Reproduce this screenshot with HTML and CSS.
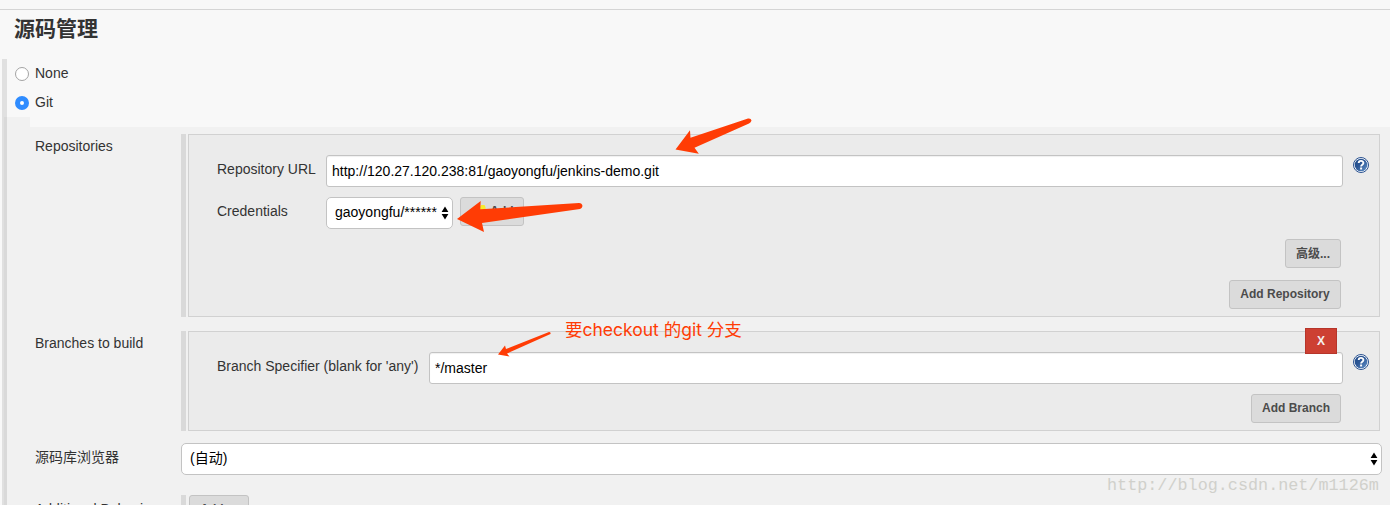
FILE: index.html
```html
<!DOCTYPE html>
<html lang="zh">
<head>
<meta charset="utf-8">
<title>源码管理</title>
<link rel="stylesheet" href="styles.css">
</head>
<body>
<svg class="defs" width="0" height="0">
  <defs>
    <linearGradient id="blue" x1="0" y1="0" x2="1" y2="1">
      <stop offset="0" stop-color="#204a87"/><stop offset="0.45" stop-color="#2c5796"/><stop offset="1" stop-color="#6795ca"/>
    </linearGradient>
    <symbol id="help" viewBox="0 0 16 16">
      <circle cx="8" cy="8" r="7.500" fill="#fff" stroke="#2a5290"/>
      <circle cx="8" cy="8" r="6.300" fill="url(#blue)"/>
      <path d="M5.700 6.100C5.700 3.200 10.400 3.200 10.400 5.900C10.400 7.700 8.100 7.600 8.100 9.500" fill="none" stroke="#fff" stroke-width="1.900"/>
      <rect x="7.100" y="10.500" width="2" height="2" fill="#fff"/>
    </symbol>
    <symbol id="updown" viewBox="0 0 8 14">
      <path d="M4 0.500L7.400 6H.6ZM4 13.500L7.400 8H.6Z"/>
    </symbol>
  </defs>
</svg>
<main class="page">
  <div class="divider"></div>
  <h2 class="title">源码管理</h2>
  <section class="section">
    <div class="radios">
      <label class="radio"><span class="dot"></span>None</label>
      <label class="radio"><span class="dot checked"></span>Git</label>
    </div>
    <div class="git">
      <div class="tab"></div>
      <div class="body">
        <div class="row">
          <div class="name">Repositories</div>
          <div class="chunk">
            <div class="panel repositories">
              <div class="field">
                <span class="label repo-label">Repository URL</span>
                <div class="input">http://120.27.120.238:81/gaoyongfu/jenkins-demo.git</div>
                <svg class="help"><use href="#help"/></svg>
              </div>
              <div class="field credentials">
                <span class="label repo-label">Credentials</span>
                <div class="select cred-select"><span>gaoyongfu/******</span><svg class="updown"><use href="#updown"/></svg></div>
                <div class="button add"><svg class="key" viewBox="0 0 16 16"><path d="M11 2H14.500L15.500 4V7L9 14H4L10 7V4Z" fill="#f8ea2c"/></svg>Add</div>
              </div>
              <div class="actions"><div class="button advanced">高级...</div></div>
              <div class="actions"><div class="button add-repo">Add Repository</div></div>
            </div>
          </div>
        </div>
        <div class="row branches-row">
          <div class="name">Branches to build</div>
          <div class="chunk">
            <div class="panel branches">
              <div class="delete">X</div>
              <div class="field">
                <span class="label branch-label">Branch Specifier (blank for 'any')</span>
                <div class="input">*/master</div>
                <svg class="help"><use href="#help"/></svg>
              </div>
              <div class="actions"><div class="button add-branch">Add Branch</div></div>
            </div>
          </div>
        </div>
        <div class="row browser-row">
          <div class="name browser-name">源码库浏览器</div>
          <div class="select browser"><span>(自动)</span><svg class="updown"><use href="#updown"/></svg></div>
        </div>
        <div class="row behaviours-row">
          <div class="name behaviours-name">Additional Behaviours</div>
          <div class="chunk"><div class="button behaviours">Add<span class="caret">▾</span></div></div>
        </div>
      </div>
    </div>
  </section>
  <svg class="arrows" viewBox="0 0 1390 505" fill="#ff3c05">
    <path d="M675.500 149.500L690 130.300L690.500 137.700L748 118.500Q751 118 751.500 120.500Q751 122.500 749 123.500L694.500 147.700L698.800 153.800Z"/>
    <path d="M457 219L480.700 201L480.300 209.300L579 203Q582 203 582.500 206Q582 208.500 580 209L482 223L484 232Z"/>
    <path d="M498 354.500L505 345.500L506 349L549 332Q551 332 550.500 334L507 353.500L509.500 356.500Z"/>
  </svg>
  <div class="note">要checkout 的git 分支</div>
  <div class="watermark">http://blog.csdn.net/m1126m</div>
</main>
</body>
</html>
```
FILE: styles.css
```css
* { box-sizing: border-box; }
body { margin: 0; background: #f8f8f8; color: #333; font: 14px/18px "Liberation Sans", "Noto Sans CJK SC", sans-serif; }
.defs { position: absolute; }
.page { position: relative; width: 1390px; height: 505px; overflow: hidden; }
.divider { height: 10px; border-bottom: 1px solid #d5d5d5; }
.title { margin: 0; height: 49px; padding: 4px 0 0 14px; font-size: 21px; line-height: 30px; font-weight: bold; }
.section { margin-left: 2px; border-left: 2px solid #e0e0e0; }
.radios { border-left: 3px solid #e0e0e0; }
.radio { display: flex; align-items: center; gap: 6px; height: 29px; padding: 0 0 2px 8px; }
.dot { width: 14px; height: 14px; margin-top: 3px; border: 1px solid #a3a3a3; border-radius: 50%; background: #fff; }
.dot.checked { border: 5px solid #2f8cff; }
.git { border-left: 3px solid #d9d9d9; }
.tab { width: 23px; height: 10px; background: #f1f1f1; }
.body { height: 378px; padding-top: 7px; background: #f1f1f1; }
.row { display: flex; padding-left: 28px; }
.name { flex: none; width: 146px; padding-top: 3px; white-space: nowrap; }
.chunk { flex: none; width: 1199px; padding-left: 2px; border-left: 5px solid #d9d9d9; }
.panel { position: relative; width: 1192px; padding: 20px 10px 0 28px; border: 1px solid #d1d1d1; background: #ebebeb; }
.repositories { height: 183px; }
.branches { height: 100px; }
.branches-row { margin-top: 14px; }
.browser-row { margin-top: 12px; }
.browser-name { padding-top: 5px; }
.behaviours-row { margin-top: 20px; }
.behaviours-name { width: 109px; margin-right: 37px; padding-top: 5px; overflow: hidden; }
.field { display: flex; height: 32px; }
.label { flex: none; padding-top: 5px; white-space: nowrap; }
.repo-label { width: 109px; }
.branch-label { width: 212px; }
.input { flex: 1; height: 32px; padding: 0 5px; border: 1px solid #c3c3c3; border-radius: 3px; background: #fff; color: #000; line-height: 31px; box-shadow: inset 0 1px 1px #f0f0f0; }
.help { flex: none; width: 16px; height: 16px; margin: 2px 0 0 10px; }
.credentials { margin-top: 10px; }
.select { display: flex; align-items: center; justify-content: space-between; height: 32px; padding: 0 3px 2px 8px; border: 1px solid #c3c3c3; border-radius: 5px; background: #fff; color: #000; line-height: 28px; }
.cred-select { width: 127px; }
.browser { width: 1201px; }
.updown { width: 8px; height: 14px; margin-top: 1px; }
.button { display: flex; align-items: center; justify-content: center; height: 29px; border: 1px solid #c3c3c3; border-radius: 3px; background: #dbdbdb; color: #4b4b4b; font-size: 12px; font-weight: bold; padding-bottom: 2px; }
.add { width: 64px; margin-left: 7px; gap: 4px; padding-bottom: 1px; }
.key { flex: none; width: 16px; height: 16px; }
.actions { display: flex; justify-content: flex-end; margin-top: 10px; padding-right: 28px; }
.actions + .actions { margin-top: 12px; }
.advanced { width: 56px; padding-bottom: 0; }
.add-repo { width: 112px; }
.add-branch { width: 90px; }
.behaviours { width: 60px; margin-left: 1px; gap: 9px; }
.caret { font-size: 10px; }
.delete { position: absolute; top: -4px; right: 42px; z-index: 1; width: 32px; height: 26px; border: 1px solid #b6352a; background: #cd4032; color: #f4efee; font-size: 12px; font-weight: bold; line-height: 24px; text-align: center; }
.arrows { position: absolute; inset: 0; width: 1390px; height: 505px; }
.note { position: absolute; left: 565px; top: 318px; color: #ff3c05; font: 17.500px/24px Inter, "Noto Sans CJK SC", sans-serif; white-space: nowrap; }
.watermark { position: absolute; left: 1107px; top: 475px; color: #d0d0cb; font: 16.800px/22px "Liberation Mono", monospace; }
```
